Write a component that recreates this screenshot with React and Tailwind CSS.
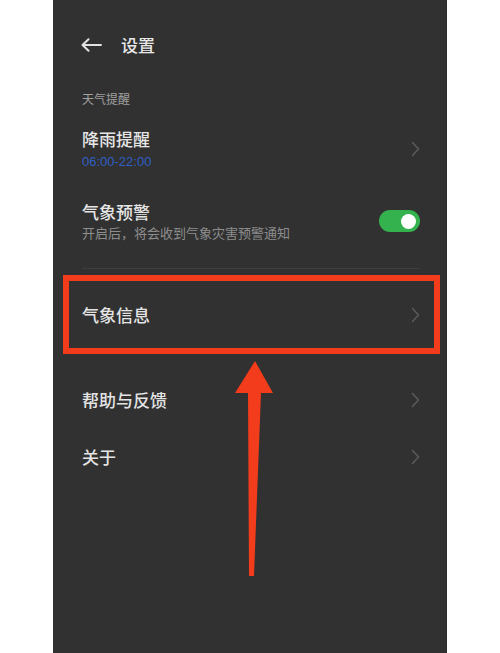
const font = { fontFamily: '"Noto Sans CJK SC", "Noto Sans", sans-serif' }

function Chevron() {
  return (
    <svg width="9" height="16" viewBox="0 0 9 16" className="shrink-0">
      <path d="M1.5 1.5 L7.5 8 L1.5 14.5" fill="none" stroke="#5a5a5a" strokeWidth="1.6" strokeLinecap="round" strokeLinejoin="round" />
    </svg>
  )
}

function Toggle() {
  return (
    <div className="shrink-0 w-[41px] h-[22px] rounded-full bg-[#33b24e] flex items-center justify-end pr-[4px]">
      <div className="w-[15px] h-[15px] rounded-full bg-white" />
    </div>
  )
}

function NavRow({ title }) {
  return (
    <div className="h-[57px] flex items-center justify-between">
      <span className="text-[17px] leading-[22px] font-medium text-[#e4e4e4]">{title}</span>
      <Chevron />
    </div>
  )
}

export default function App() {
  return (
    <div className="relative w-[500px] h-[653px] bg-white overflow-hidden" style={font}>
      <div className="ml-[53px] w-[394px] h-full bg-[#313131] border-r border-[#2a2a2a] pl-[29px] pr-[26px]">
        {/* Cabecera */}
        <div className="h-[90px] flex items-center">
          <svg width="21" height="14" viewBox="0 0 21 14" className="ml-[-1px]">
            <path d="M1.5 7 H20 M7.5 1.2 L1.5 7 L7.5 12.8" fill="none" stroke="#e2e2e2" strokeWidth="2" strokeLinecap="round" strokeLinejoin="round" />
          </svg>
          <span className="ml-[19px] text-[17px] leading-[22px] font-medium text-[#e8e8e8]">设置</span>
        </div>

        <div className="text-[12px] leading-[18px] text-[#a0a0a0]">天气提醒</div>

        {/* Recordatorio de lluvia */}
        <div className="mt-[20px] flex items-center justify-between">
          <div>
            <div className="text-[17px] leading-[22px] font-medium text-[#e6e6e6]">降雨提醒</div>
            <div className="mt-[4px] text-[13px] leading-[16px] text-[#2f5fc4]" style={{ fontFamily: '"Liberation Sans", sans-serif' }}>06:00-22:00</div>
          </div>
          <Chevron />
        </div>

        {/* Alerta meteorológica */}
        <div className="mt-[31px] flex items-center justify-between">
          <div>
            <div className="text-[17px] leading-[22px] font-medium text-[#e6e6e6]">气象预警</div>
            <div className="mt-[2px] text-[13px] leading-[16px] text-[#8e8e8e]">开启后，将会收到气象灾害预警通知</div>
          </div>
          <Toggle />
        </div>

        <div className="mt-[27px] h-px bg-[#3e3e3e]" />

        {/* Fila resaltada */}
        <div className="mt-[6px] ml-[-19px] mr-[-20px] h-[79px] border-[6px] border-[#f23c1b] pl-[13px] pr-[14px] flex items-center justify-between">
          <span className="text-[17px] leading-[22px] font-medium text-[#e4e4e4]">气象信息</span>
          <Chevron />
        </div>

        <div className="mt-[17px]">
          <NavRow title="帮助与反馈" />
          <NavRow title="关于" />
        </div>
      </div>

      {/* Flecha */}
      <svg className="absolute left-0 top-0 pointer-events-none" width="500" height="653" viewBox="0 0 500 653">
        <polygon points="255,361 273,393 261,393 254,576 249,576 248,393 235,393" fill="#f23c1b" />
      </svg>
    </div>
  )
}
